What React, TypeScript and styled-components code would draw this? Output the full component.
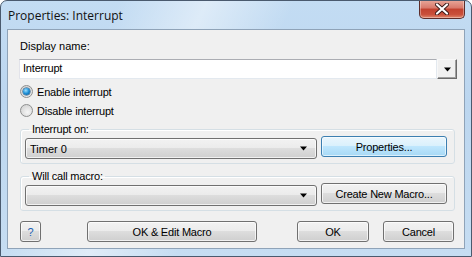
import React from 'react';
import styled, { createGlobalStyle, css } from 'styled-components';

const GlobalStyle = createGlobalStyle`
  html, body {
    margin: 0;
    padding: 0;
    background: #ffffff;
  }
  * {
    box-sizing: border-box;
  }
`;

const Window = styled.div`
  width: 472px;
  height: 257px;
  border: 1px solid #4a5a6e;
  border-radius: 7px 7px 0 0;
  background:
    linear-gradient(115deg, rgba(255, 255, 255, 0) 20%, rgba(255, 255, 255, 0.45) 35%, rgba(255, 255, 255, 0) 50%),
    linear-gradient(180deg, #c3dcf3 0%, #bcd6ef 40%, #c6ddf2 100%);
  display: flex;
  flex-direction: column;
  font-family: 'Liberation Sans', Arial, sans-serif;
  font-size: 11px;
  color: #000;
  overflow: hidden;
`;

const TitleBar = styled.div`
  height: 28px;
  display: flex;
  align-items: flex-start;
  padding-left: 7px;
  flex-shrink: 0;
`;

const Title = styled.div`
  font-family: 'Open Sans', 'Noto Sans', sans-serif;
  font-size: 12px;
  line-height: 16px;
  margin-top: 7px;
  color: #111;
  flex: 1;
`;

const CloseButton = styled.div`
  width: 46px;
  height: 19px;
  margin-right: 6px;
  margin-top: -1px;
  border: 1px solid #5d2d2a;
  border-top: none;
  border-radius: 0 0 5px 5px;
  background: linear-gradient(180deg, #e9a99b 0%, #d8786a 45%, #c2422f 50%, #c94f3a 80%, #e0866b 100%);
  box-shadow: inset 0 0 0 1px rgba(255, 255, 255, 0.35);
  display: flex;
  align-items: center;
  justify-content: center;
`;

const Panel = styled.div`
  flex: 1;
  margin: 0 6px 7px 6px;
  border: 1px solid #8fa3b8;
  background: #f0f0f0;
  padding: 10px 7px 0 11px;
  display: flex;
  flex-direction: column;
`;

const Label = styled.div`
  line-height: 13px;
  padding-left: 1px;
  height: 13px;
`;

const InputRow = styled.div`
  display: flex;
  margin-top: 6px;
  height: 20px;
`;

const TextInput = styled.div`
  flex: 1;
  background: #fff;
  border: 1px solid #e3e9ef;
  border-top-color: #abadb3;
  border-left-color: #e2e3ea;
  padding-left: 3px;
  line-height: 17px;
  letter-spacing: -0.2px;
`;

const DropButton = styled.div`
  width: 20px;
  background: #f0f0f0;
  border: 1px solid;
  border-color: #f8f8f8 #6a6a6a #6a6a6a #f8f8f8;
  box-shadow: inset -1px -1px 0 #a0a0a0;
  display: flex;
  align-items: center;
  justify-content: center;
`;

const RadioRow = styled.div<{ $first?: boolean }>`
  height: 19px;
  display: flex;
  align-items: center;
  margin-top: ${(p) => (p.$first ? '3px' : '0')};
  padding-left: 1px;
  letter-spacing: -0.2px;
`;

const RadioCircle = styled.span<{ $checked?: boolean }>`
  width: 13px;
  height: 13px;
  border-radius: 50%;
  border: 1px solid #8e8f8f;
  background: radial-gradient(circle at 60% 65%, #f6f6f6 0%, #dcdcdc 60%, #cfcfcf 100%);
  display: flex;
  align-items: center;
  justify-content: center;
  margin-right: 4px;
  ${(p) =>
    p.$checked &&
    css`
      &::after {
        content: '';
        width: 7px;
        height: 7px;
        border-radius: 50%;
        background: radial-gradient(circle at 40% 35%, #9ee0ff 0%, #1d8fd6 50%, #0b4d86 100%);
        box-shadow: 0 0 0 0.5px #1a4e78;
      }
    `}
`;

const Group = styled.fieldset<{ $gap: number }>`
  margin: ${(p) => p.$gap}px 3px 0 1px;
  padding: 0 7px 4px 4px;
  border: 1px solid #d5dfe5;
  border-radius: 3px;
  box-shadow: inset 1px 1px 0 #fff;
`;

const Legend = styled.legend`
  margin-left: 4px;
  padding: 0 2px 0 3px;
  line-height: 13px;
  height: 13px;
  letter-spacing: -0.2px;
`;

const GroupRow = styled.div`
  display: flex;
  align-items: flex-start;
  gap: 4px;
`;

const buttonFace = css`
  border: 1px solid #707070;
  border-radius: 3px;
  background: linear-gradient(180deg, #f2f2f2 0%, #ebebeb 49%, #dddddd 50%, #cfcfcf 100%);
  box-shadow: inset 0 0 0 1px rgba(255, 255, 255, 0.7);
`;

const Combo = styled.div`
  ${buttonFace};
  width: 292px;
  height: 21px;
  margin-top: 2px;
  display: flex;
  align-items: center;
  padding: 0 9px 0 4px;
  font-size: 11px;
`;

const ComboText = styled.span`
  flex: 1;
`;

const Button = styled.div<{ $width: number; $hot?: boolean; $offset?: number }>`
  ${buttonFace};
  width: ${(p) => p.$width}px;
  margin-left: ${(p) => p.$offset ?? 0}px;
  height: 21px;
  display: flex;
  align-items: center;
  justify-content: center;
  font-size: 11px;
  letter-spacing: -0.2px;
  flex-shrink: 0;
  ${(p) =>
    p.$hot &&
    css`
      border-color: #3c7fb1;
      background: linear-gradient(180deg, #eaf6fd 0%, #d9f0fc 49%, #bee6fd 50%, #a7d9f5 100%);
      box-shadow: inset 0 0 0 1px rgba(255, 255, 255, 0.6);
    `}
`;

const Footer = styled.div`
  display: flex;
  margin-top: 10px;
  padding: 0 3px 0 1px;
  gap: 14px;
`;

const Spacer = styled.div`
  flex: 1;
`;

const HelpText = styled.span`
  color: #1a5fb4;
`;

const Arrow = ({ size = 7 }: { size?: number }) => (
  <svg width={size} height={Math.ceil(size / 2) + 1} viewBox="0 0 7 4">
    <path d="M0 0h7L3.5 4z" fill="#000" />
  </svg>
);

const CloseGlyph = () => (
  <svg width="14" height="12" viewBox="0 0 14 12">
    <path
      d="M2 1.5L12 10.5M12 1.5L2 10.5"
      stroke="#3a1a18"
      strokeWidth="4"
      strokeLinecap="round"
    />
    <path d="M2 1.5L12 10.5M12 1.5L2 10.5" stroke="#ffffff" strokeWidth="2.2" strokeLinecap="round" />
  </svg>
);

export default function App() {
  return (
    <>
      <GlobalStyle />
      <Window>
        <TitleBar>
          <Title>Properties: Interrupt</Title>
          <CloseButton>
            <CloseGlyph />
          </CloseButton>
        </TitleBar>
        <Panel>
          <Label>Display name:</Label>
          <InputRow>
            <TextInput>Interrupt</TextInput>
            <DropButton>
              <Arrow />
            </DropButton>
          </InputRow>
          <RadioRow $first>
            <RadioCircle $checked />
            Enable interrupt
          </RadioRow>
          <RadioRow>
            <RadioCircle />
            Disable interrupt
          </RadioRow>
          <Group $gap={3}>
            <Legend>Interrupt on:</Legend>
            <GroupRow>
              <Combo>
                <ComboText>Timer 0</ComboText>
                <Arrow />
              </Combo>
              <Button $width={126} $hot>
                Properties...
              </Button>
            </GroupRow>
          </Group>
          <Group $gap={6}>
            <Legend>Will call macro:</Legend>
            <GroupRow>
              <Combo>
                <ComboText />
                <Arrow />
              </Combo>
              <Button $width={126}>Create New Macro...</Button>
            </GroupRow>
          </Group>
          <Footer>
            <Button $width={21}>
              <HelpText>?</HelpText>
            </Button>
            <Button $width={170} $offset={32}>
              OK &amp; Edit Macro
            </Button>
            <Spacer />
            <Button $width={72}>OK</Button>
            <Button $width={71}>Cancel</Button>
          </Footer>
        </Panel>
      </Window>
    </>
  );
}
